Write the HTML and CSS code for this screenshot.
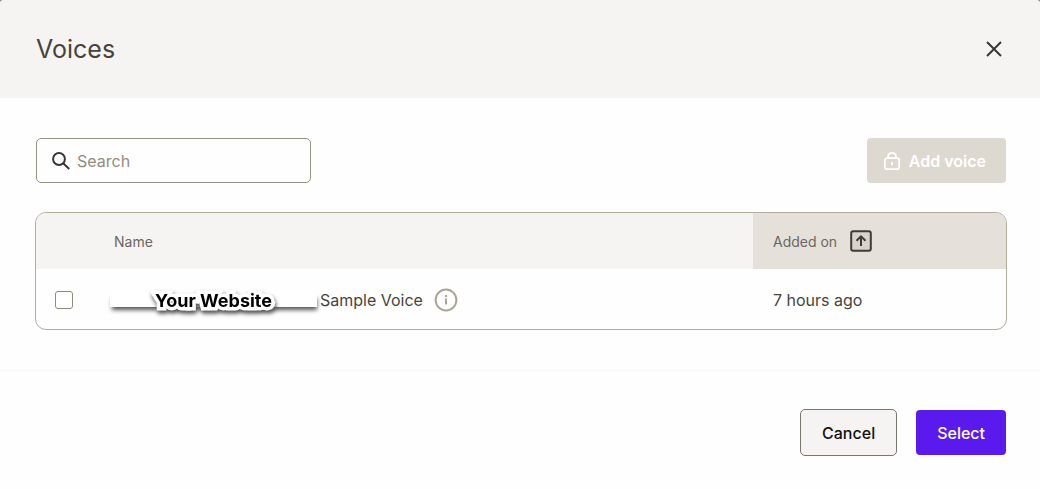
FILE: index.html
```html
<!DOCTYPE html>
<html lang="en">
  <head>
    <meta charset="UTF-8" />
    <meta name="viewport" content="width=device-width, initial-scale=1" />
    <title>Voices</title>
    <link rel="stylesheet" href="styles.css">
  </head>
  <body>
    <div class="dialog" role="dialog" aria-labelledby="dialog-title">
      <header class="dialog-header">
        <h1 id="dialog-title">Voices</h1>
        <button class="close-btn" type="button" aria-label="Close">
          <svg width="16" height="16" viewBox="0 0 16 16" fill="none" stroke="currentColor" stroke-width="2">
            <path d="M1 1l14 14M15 1L1 15" />
          </svg>
        </button>
      </header>

      <main class="dialog-body">
        <div class="toolbar">
          <label class="search">
            <svg width="18" height="18" viewBox="0 0 18 18" fill="none" stroke="currentColor" stroke-width="2">
              <circle cx="7" cy="7" r="5.9" />
              <path d="M11.2 11.2l6 5.8" />
            </svg>
            <input type="text" placeholder="Search" aria-label="Search" />
          </label>
          <button class="btn add-btn" type="button" disabled>
            <svg width="16" height="18" viewBox="0 0 16 18" fill="none" stroke="currentColor" stroke-width="1.8">
              <rect x="0.9" y="6.2" width="14.2" height="10.9" rx="2" />
              <path d="M4 6.2V4.6a4 3.7 0 0 1 8 0v1.6M8 10v3.2" />
            </svg>
            Add voice
          </button>
        </div>

        <div class="table-wrap">
          <table>
            <thead>
              <tr>
                <th class="col-check"></th>
                <th>Name</th>
                <th class="col-added">
                  <div class="cell">
                    Added on
                    <button class="sort-btn" type="button" aria-label="Sort by date added">
                      <svg width="22" height="22" viewBox="0 0 22 22" fill="none" stroke="currentColor" stroke-width="2">
                        <rect x="1.2" y="1.2" width="19.6" height="19.6" rx="2" fill="#d8d4ca" />
                        <path d="M11 16V6.5M6.5 10.8L11 6.3l4.5 4.5" />
                      </svg>
                    </button>
                  </div>
                </th>
              </tr>
            </thead>
            <tbody>
              <tr>
                <td class="col-check">
                  <input type="checkbox" aria-label="Select Your Website Sample Voice" />
                </td>
                <td>
                  <div class="cell name-cell">
                    <span class="site-tag"><b>Your Website</b></span>
                    <span>Sample Voice</span>
                    <svg class="info" width="24" height="24" viewBox="0 0 24 24" fill="none" stroke="currentColor" stroke-width="2">
                      <circle cx="12" cy="12" r="10.4" />
                      <path d="M12 10.5v6M12 7v2" />
                    </svg>
                  </div>
                </td>
                <td>7 hours ago</td>
              </tr>
            </tbody>
          </table>
        </div>
      </main>

      <footer class="dialog-footer">
        <button class="btn cancel-btn" type="button">Cancel</button>
        <button class="btn select-btn" type="button">Select</button>
      </footer>
    </div>
  </body>
</html>
```

FILE: styles.css
```css
* {
  box-sizing: border-box;
}
body {
  margin: 0;
  background: #8f8d89;
  font-family: Inter, "Liberation Sans", sans-serif;
  font-size: 16px;
  color: #47433c;
}
button,
input {
  font: inherit;
}
svg {
  display: block;
  flex: none;
}
.dialog {
  min-height: 100vh;
  background: #fefefe;
  border-radius: 4px 4px 0 0;
  overflow: hidden;
}
.dialog-header {
  display: flex;
  justify-content: space-between;
  align-items: center;
  height: 98px;
  padding: 0 34px 0 36px;
  background: #f5f4f2;
}
h1 {
  margin: 0;
  font-size: 25px;
  font-weight: 400;
}
.close-btn {
  padding: 4px;
  border: none;
  background: none;
  color: #3a3733;
  cursor: pointer;
}
.dialog-body {
  padding: 40px 33px 40px 35px;
}
.toolbar {
  display: flex;
  justify-content: space-between;
  align-items: center;
  padding: 0 1px;
  margin-bottom: 29px;
}
.search {
  display: flex;
  align-items: center;
  gap: 7px;
  width: 275px;
  height: 45px;
  padding: 0 15px;
  border: 1px solid #969281;
  border-radius: 5px;
  color: #3a3733;
}
.search input {
  flex: 1;
  min-width: 0;
  padding: 0;
  border: none;
  outline: none;
  background: none;
}
.search input::placeholder {
  color: #918c7d;
  opacity: 1;
}
.btn {
  display: flex;
  justify-content: center;
  align-items: center;
  height: 45px;
  padding: 0 21px;
  border: none;
  border-radius: 4px;
  font-weight: 500;
  cursor: pointer;
}
.add-btn {
  gap: 9px;
  padding: 0 20px 0 17px;
  background: #ddd8d0;
  color: #fff;
  font-weight: 600;
}
.table-wrap {
  border: 1px solid #b0ac9e;
  border-radius: 11px;
  overflow: hidden;
}
table {
  width: 100%;
  border-collapse: collapse;
}
th,
td {
  padding: 0 0 0 20px;
  text-align: left;
}
th {
  height: 56px;
  background: #f5f4f2;
  font-size: 14px;
  font-weight: 400;
  color: #6b665e;
}
td {
  height: 60px;
  padding-top: 1px;
}
.col-check {
  width: 58px;
}
td.col-check {
  padding-left: 19px;
}
th.col-added {
  width: 253px;
  background: #e5e1da;
}
.cell {
  display: flex;
  align-items: center;
  gap: 13px;
}
.sort-btn {
  padding: 0;
  border: none;
  background: none;
  color: #3f3b36;
  cursor: pointer;
}
input[type="checkbox"] {
  appearance: none;
  display: block;
  width: 18px;
  height: 18px;
  margin: 0;
  border: 1px solid #8f8a7b;
  border-radius: 3px;
  background: #fff;
}
.name-cell {
  gap: 11px;
}
/* blank strip with the outlined site name on top */
.site-tag {
  display: flex;
  justify-content: center;
  align-items: center;
  width: 207px;
  height: 14px;
  margin: 0 -8px 0 -4px;
  background: #fff;
  box-shadow: 1px 4px 4px -1px #555;
  color: #000;
}
.site-tag b {
  font-size: 18px;
  line-height: 20px;
  padding-top: 2px;
  -webkit-text-stroke: 7px #fff;
  stroke-linejoin: round;
  paint-order: stroke fill;
  filter: drop-shadow(1px 3px 2px #555);
}
.info {
  color: #aaa497;
}
.dialog-footer {
  display: flex;
  justify-content: flex-end;
  align-items: center;
  gap: 19px;
  padding: 38px 34px;
  border-top: 1px solid #f8f8f6;
}
.cancel-btn {
  height: 47px;
  border: 1px solid #79766a;
  border-radius: 5px;
  background: #f5f4f2;
  color: #111;
}
.select-btn {
  background: #5a1aee;
  color: #fff;
}
```
